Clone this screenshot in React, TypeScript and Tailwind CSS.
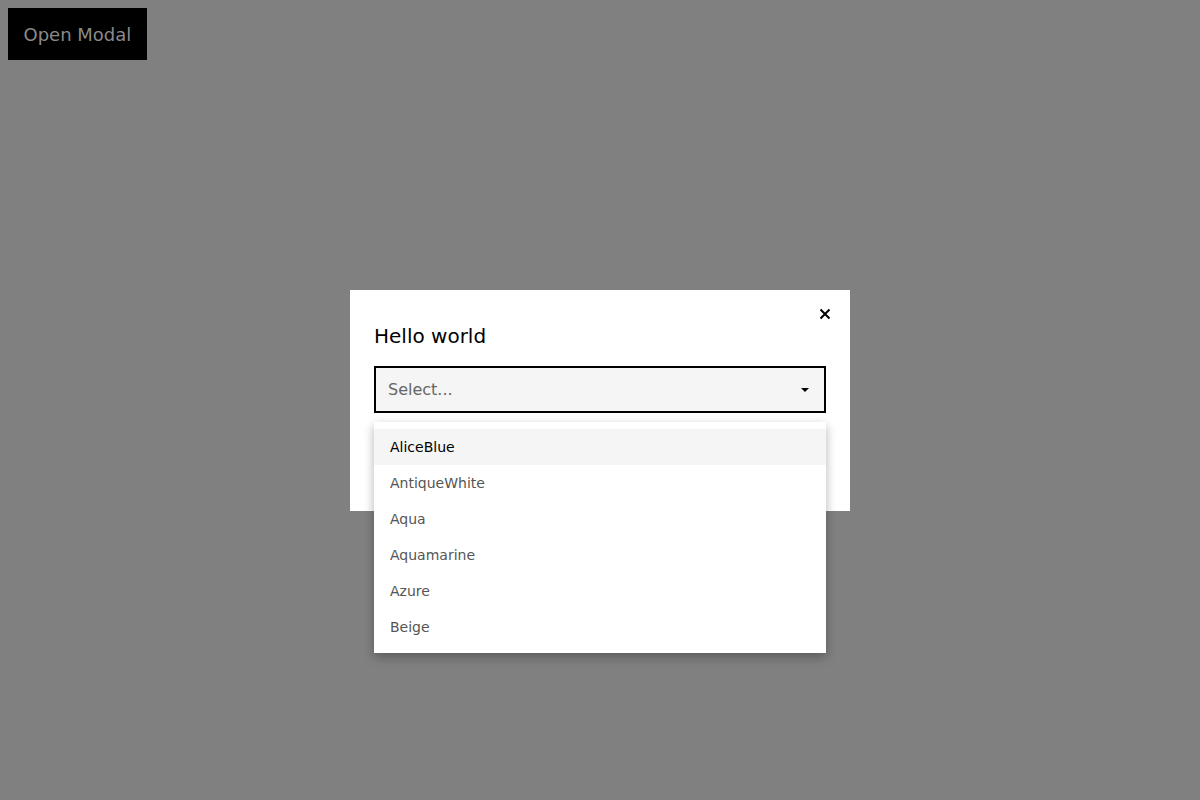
const colors = ["AliceBlue", "AntiqueWhite", "Aqua", "Aquamarine", "Azure", "Beige"];

function Dropdown() {
	return (
		<div className="absolute top-[calc(100%+9px)] right-0 left-0 z-10 bg-white pt-[7px] pb-[8px] shadow-[0_4px_10px_rgba(0,0,0,0.3)]">
			{colors.map((c, i) => (
				<div
					className={
						i === 0
							? "flex h-9 items-center bg-[#f5f5f5] px-4 text-[14px] text-black"
							: "flex h-9 items-center px-4 text-[14px] text-[#555]"
					}
					key={c}
				>
					{c}
				</div>
			))}
		</div>
	);
}

export default function App() {
	return (
		<div className="relative flex h-[800px] w-[1200px] flex-col bg-[#808080] font-['DejaVu_Sans',sans-serif]">
			<div className="p-2">
				<button className="h-[52px] bg-black px-[15.5px] text-[18px] text-[#8a8a8a]">Open Modal</button>
			</div>

			<div className="absolute inset-0 flex items-start justify-center pt-[290px]">
				<div className="relative flex w-[500px] flex-col bg-white px-6 pt-[24px] pb-[98px]">
					<button className="absolute top-[16px] right-[17px] flex h-4 w-4 items-center justify-center">
						<svg height="12" viewBox="0 0 12 12" width="12">
							<path d="M1.5 1.5 L10.5 10.5 M10.5 1.5 L1.5 10.5" stroke="#000" strokeWidth="2" />
						</svg>
					</button>
					<h2 className="text-[20px] leading-[44px] text-black">Hello world</h2>
					<div className="relative mt-[8px]">
						<div className="flex h-[47px] items-center justify-between border-2 border-black bg-[#f5f5f5] pr-[15px] pl-3">
							<span className="text-[16px] text-[#666]">Select...</span>
							<svg height="4" viewBox="0 0 8 4" width="8">
								<path d="M0 0 L8 0 L4 4 Z" fill="#000" />
							</svg>
						</div>
						<Dropdown />
					</div>
				</div>
			</div>
		</div>
	);
}
